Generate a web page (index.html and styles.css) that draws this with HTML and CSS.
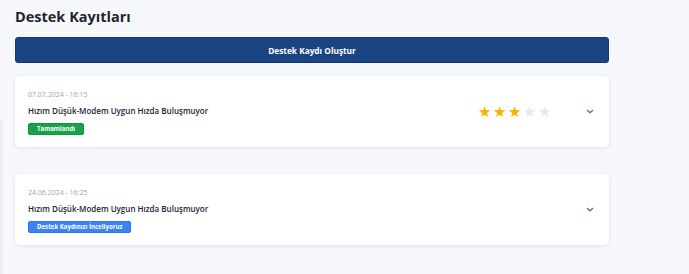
FILE: index.html
```html
<!DOCTYPE html>
<html lang="tr">
<head>
    <meta charset="UTF-8" />
    <meta name="viewport" content="width=device-width, initial-scale=1.0" />
    <title>Destek Kayıtları</title>
    <link rel="stylesheet" href="styles.css">
</head>
<body>
    <div class="side-edge"></div>
    <div class="page">
        <h1>Destek Kayıtları</h1>

        <button class="create-btn">Destek Kaydı Oluştur</button>

        <div class="ticket-list">
            <div class="ticket">
                <div class="ticket-info">
                    <span class="ticket-date">07.07.2024 - 16:15</span>
                    <span class="ticket-title">Hızım Düşük-Modem Uygun Hızda Buluşmuyor</span>
                    <span class="badge done">Tamamlandı</span>
                </div>
                <div class="stars">
                    <span class="star on">★</span>
                    <span class="star on">★</span>
                    <span class="star on">★</span>
                    <span class="star">★</span>
                    <span class="star">★</span>
                </div>
                <svg class="chevron" width="8" height="5" viewBox="0 0 8 5">
                    <path d="M1 1 L4 3.8 L7 1" fill="none" stroke="#5b6f9a" stroke-width="1.3" />
                </svg>
            </div>

            <div class="ticket">
                <div class="ticket-info">
                    <span class="ticket-date">24.06.2024 - 16:25</span>
                    <span class="ticket-title">Hızım Düşük-Modem Uygun Hızda Buluşmuyor</span>
                    <span class="badge review">Destek Kaydınızı İnceliyoruz</span>
                </div>
                <svg class="chevron" width="8" height="5" viewBox="0 0 8 5">
                    <path d="M1 1 L4 3.8 L7 1" fill="none" stroke="#5b6f9a" stroke-width="1.3" />
                </svg>
            </div>
        </div>
    </div>
</body>
</html>
```

FILE: styles.css
```css
body {
    margin: 0;
    background-color: #f7f8fc;
    font-family: "Open Sans", "Noto Sans", sans-serif;
    color: #1e2433;
    position: relative;
    height: 274px;
    overflow: hidden;
}
.side-edge {
    position: absolute;
    left: 0;
    top: 121px;
    bottom: 0;
    width: 3px;
    background-color: #eceff5;
    border-top: 1px solid #dfe3ea;
}
.page {
    width: 594px;
    padding: 0 15px;
}
h1 {
    margin: 0;
    padding-top: 6px;
    font-size: 14.5px;
    font-weight: 700;
    line-height: 22px;
    color: #1f2433;
}
.create-btn {
    display: block;
    width: 100%;
    height: 26px;
    margin-top: 9px;
    background-color: #1b4482;
    border: 1px solid #143a73;
    border-radius: 3px;
    color: white;
    font-family: inherit;
    font-size: 8.3px;
    font-weight: 700;
}
.ticket-list {
    display: flex;
    flex-direction: column;
    gap: 27px;
    margin-top: 13px;
}
.ticket {
    display: flex;
    align-items: center;
    height: 71px;
    padding: 0 15px 0 13px;
    background-color: white;
    border-radius: 5px;
    box-shadow: 0 1px 4px rgba(40, 60, 110, 0.12);
}
.ticket-info {
    flex-grow: 1;
    display: flex;
    flex-direction: column;
    align-items: flex-start;
}
.ticket-date {
    font-size: 7px;
    color: #9aa3b5;
    line-height: 11px;
}
.ticket-title {
    margin-top: 5px;
    font-size: 8px;
    font-weight: 600;
    line-height: 12px;
}
.badge {
    margin-top: 6px;
    padding: 0 8px;
    height: 10px;
    line-height: 10px;
    border-radius: 2px;
    font-size: 6.1px;
    font-weight: 700;
    color: white;
}
.badge.done {
    background-color: #16a34a;
    border: 1px solid #12913f;
}
.badge.review {
    background-color: #3b82f6;
    border: 1px solid #3373e6;
}
.stars {
    display: flex;
    gap: 2px;
    margin-right: 35px;
}
.star {
    font-size: 15px;
    line-height: 15px;
    color: #e5e8ef;
}
.star.on {
    color: #f4b400;
}
.chevron {
    display: block;
}
```
